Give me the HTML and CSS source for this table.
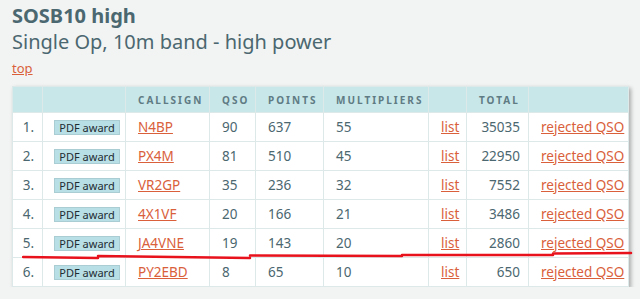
FILE: index.html
```html
<!DOCTYPE html>
<html lang="en">
<head>
    <meta charset="UTF-8">
    <title>SOSB10 high</title>
    <link rel="stylesheet" href="styles.css">
</head>
<body>
    <div class="page">
        <h1>SOSB10 high</h1>
        <h2>Single Op, 10m band - high power</h2>
        <a class="top" href="#">top</a>

        <div class="results">
            <table>
                <colgroup>
                    <col class="c-rank"><col class="c-pdf"><col class="c-call"><col class="c-qso">
                    <col class="c-pts"><col class="c-mult"><col class="c-list"><col class="c-total"><col class="c-rej">
                </colgroup>
                <thead>
                    <tr>
                        <th></th><th></th><th>Callsign</th><th>QSO</th><th>Points</th>
                        <th>Multipliers</th><th></th><th>Total</th><th></th>
                    </tr>
                </thead>
                <tbody>
                    <tr>
                        <td class="rank">1.</td><td class="pdf"><span class="badge">PDF award</span></td>
                        <td><a href="#">N4BP</a></td><td>90</td><td>637</td><td>55</td>
                        <td><a href="#">list</a></td><td class="total">35035</td><td><a href="#">rejected QSO</a></td>
                    </tr>
                    <tr>
                        <td class="rank">2.</td><td class="pdf"><span class="badge">PDF award</span></td>
                        <td><a href="#">PX4M</a></td><td>81</td><td>510</td><td>45</td>
                        <td><a href="#">list</a></td><td class="total">22950</td><td><a href="#">rejected QSO</a></td>
                    </tr>
                    <tr>
                        <td class="rank">3.</td><td class="pdf"><span class="badge">PDF award</span></td>
                        <td><a href="#">VR2GP</a></td><td>35</td><td>236</td><td>32</td>
                        <td><a href="#">list</a></td><td class="total">7552</td><td><a href="#">rejected QSO</a></td>
                    </tr>
                    <tr>
                        <td class="rank">4.</td><td class="pdf"><span class="badge">PDF award</span></td>
                        <td><a href="#">4X1VF</a></td><td>20</td><td>166</td><td>21</td>
                        <td><a href="#">list</a></td><td class="total">3486</td><td><a href="#">rejected QSO</a></td>
                    </tr>
                    <tr>
                        <td class="rank">5.</td><td class="pdf"><span class="badge">PDF award</span></td>
                        <td><a href="#">JA4VNE</a></td><td>19</td><td>143</td><td>20</td>
                        <td><a href="#">list</a></td><td class="total">2860</td><td><a href="#">rejected QSO</a></td>
                    </tr>
                    <tr>
                        <td class="rank">6.</td><td class="pdf"><span class="badge">PDF award</span></td>
                        <td><a href="#">PY2EBD</a></td><td>8</td><td>65</td><td>10</td>
                        <td><a href="#">list</a></td><td class="total">650</td><td><a href="#">rejected QSO</a></td>
                    </tr>
                </tbody>
            </table>

            <!-- hand-drawn marker under row 5 -->
            <svg class="marker" width="612" height="10" viewBox="0 0 612 10">
                <path d="M1 6 L76 7 M76 5 L228 7 M228 4.5 L380 5 M380 4 L531 4 M531 2.5 L609 2"
                      stroke="#e8121d" stroke-width="2.5" fill="none" stroke-linecap="round"/>
            </svg>
        </div>
    </div>
</body>
</html>
```

FILE: styles.css
```css
body {
    margin: 0;
    background: #f2f4f3;
    font-family: "Noto Sans", "DejaVu Sans", sans-serif;
    color: #4b6770;
}
.page {
    padding: 4px 12px 0 12px;
}
h1 {
    margin: 0;
    font-size: 20px;
    font-weight: bold;
    line-height: 24px;
}
h2 {
    margin: 0;
    font-size: 20px;
    font-weight: normal;
    line-height: 28px;
}
a {
    color: #d9603b;
}
.top {
    display: inline-block;
    font-size: 13px;
    margin-top: 4px;
    line-height: 17px;
}
.results {
    position: relative;
    margin-top: 8px;
    width: 616px;
}
table {
    width: 616px;
    table-layout: fixed;
    border-collapse: collapse;
    background: #fff;
    box-shadow: 2px 2px 4px rgba(0,0,0,0.3);
    font-size: 13.5px;
}
.c-rank { width: 30px; }
.c-pdf { width: 83px; }
.c-call { width: 84px; }
.c-qso { width: 46px; }
.c-pts { width: 68px; }
.c-mult { width: 105px; }
.c-list { width: 38px; }
.c-total { width: 62px; }
.c-rej { width: 100px; }
th, td {
    border: 1px solid #dde9e9;
    padding: 0 0 0 12px;
    text-align: left;
    white-space: nowrap;
}
thead tr {
    background: #c8e7e9;
}
th {
    height: 25px;
    font-size: 10px;
    font-weight: bold;
    letter-spacing: 2px;
    text-transform: uppercase;
    color: #5f7b84;
}
td {
    height: 28px;
}
td.rank {
    text-align: right;
    padding: 0 8px 0 0;
}
td.pdf {
    text-align: center;
    padding: 0 0 0 6px;
}
td.total {
    text-align: right;
    padding: 0 8px 0 0;
}
.badge {
    display: inline-block;
    background: #b9dfe6;
    border: 1px solid #a9cdd3;
    color: #1f2d33;
    font-size: 11px;
    line-height: 13px;
    padding: 0 4px;
}
.marker {
    position: absolute;
    left: 10px;
    top: 165px;
}
```
